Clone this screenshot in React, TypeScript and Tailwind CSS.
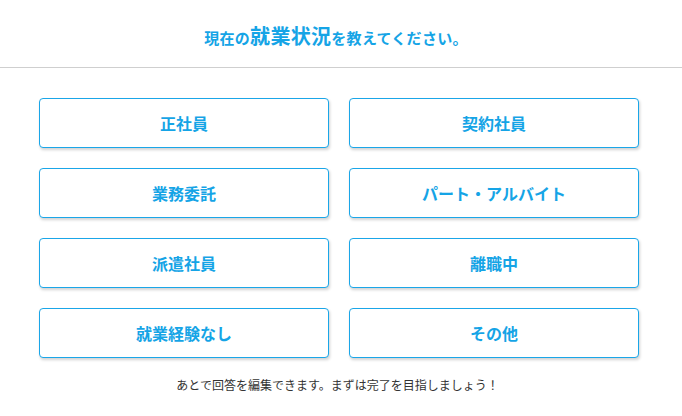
export default function App() {
  const items = [
    "正社員",
    "契約社員",
    "業務委託",
    "パート・アルバイト",
    "派遣社員",
    "離職中",
    "就業経験なし",
    "その他",
  ];
  return (
    <div
      className="w-[682px] h-[416px] bg-white overflow-hidden"
      style={{ fontFamily: '"Noto Sans CJK JP", "Noto Sans", sans-serif' }}
    >
      <div className="h-[68px] flex items-center justify-center border-b border-[#cfcfcf] pt-[5px]">
        <h1 className="text-[#15a4e6] font-bold text-[15px] leading-none pr-[10px] tracking-[0.3px]">
          現在の<span className="text-[20px]">就業状況</span>を教えてください。
        </h1>
      </div>
      <div className="pl-[39px] pt-[30px]">
        <div className="grid grid-cols-2 w-[600px] gap-x-[20px] gap-y-[20px]">
          {items.map((t) => (
            <button
              key={t}
              className="h-[50px] bg-white border-[1.5px] border-[#1aa6e8] rounded-[4px] shadow-[1px_2px_3px_rgba(0,0,0,0.18)] flex items-center justify-center text-[#15a4e6] font-bold text-[16px]"
            >
              {t}
            </button>
          ))}
        </div>
      </div>
      <p className="text-center text-[12px] text-[#333] mt-[18px] pr-[7px]">
        あとで回答を編集できます。まずは完了を目指しましょう！
      </p>
    </div>
  );
}
